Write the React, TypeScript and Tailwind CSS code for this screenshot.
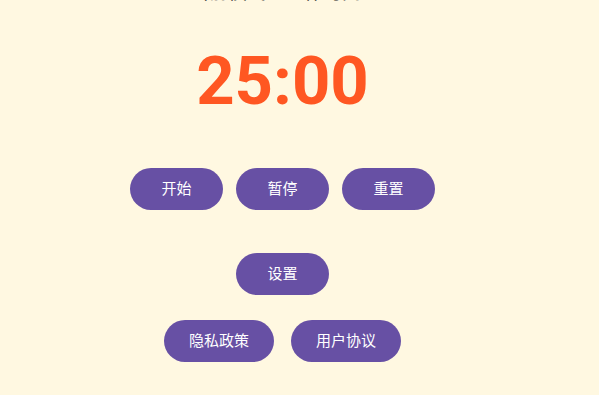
const Pill = ({ label, wide }: { label: string; wide?: boolean }) => (
  <button
    className={`${wide ? 'w-[110px]' : 'w-[93px]'} h-[42px] rounded-full bg-[#6750a4] text-white text-[15px] flex items-center justify-center`}
  >
    {label}
  </button>
);

export default function App() {
  return (
    <div
      className="w-[599px] h-[395px] overflow-hidden bg-[#fff8e1]"
      style={{ fontFamily: 'Roboto, "Noto Sans CJK SC", sans-serif' }}
    >
      <div className="w-[565px] flex flex-col items-center">
        <div className="text-[19px] leading-[19px] mt-[-17px] mr-[14px] text-[#222]">当前模式：工作时间</div>
        <div className="mt-[46px] text-[67px] leading-none font-bold text-[#ff5722]">25:00</div>
        <div className="mt-[53px] flex gap-[13px]">
          <Pill label="开始" />
          <Pill label="暂停" />
          <Pill label="重置" />
        </div>
        <div className="mt-[43px]">
          <Pill label="设置" />
        </div>
        <div className="mt-[25px] flex gap-[17px]">
          <Pill label="隐私政策" wide />
          <Pill label="用户协议" wide />
        </div>
      </div>
    </div>
  );
}
